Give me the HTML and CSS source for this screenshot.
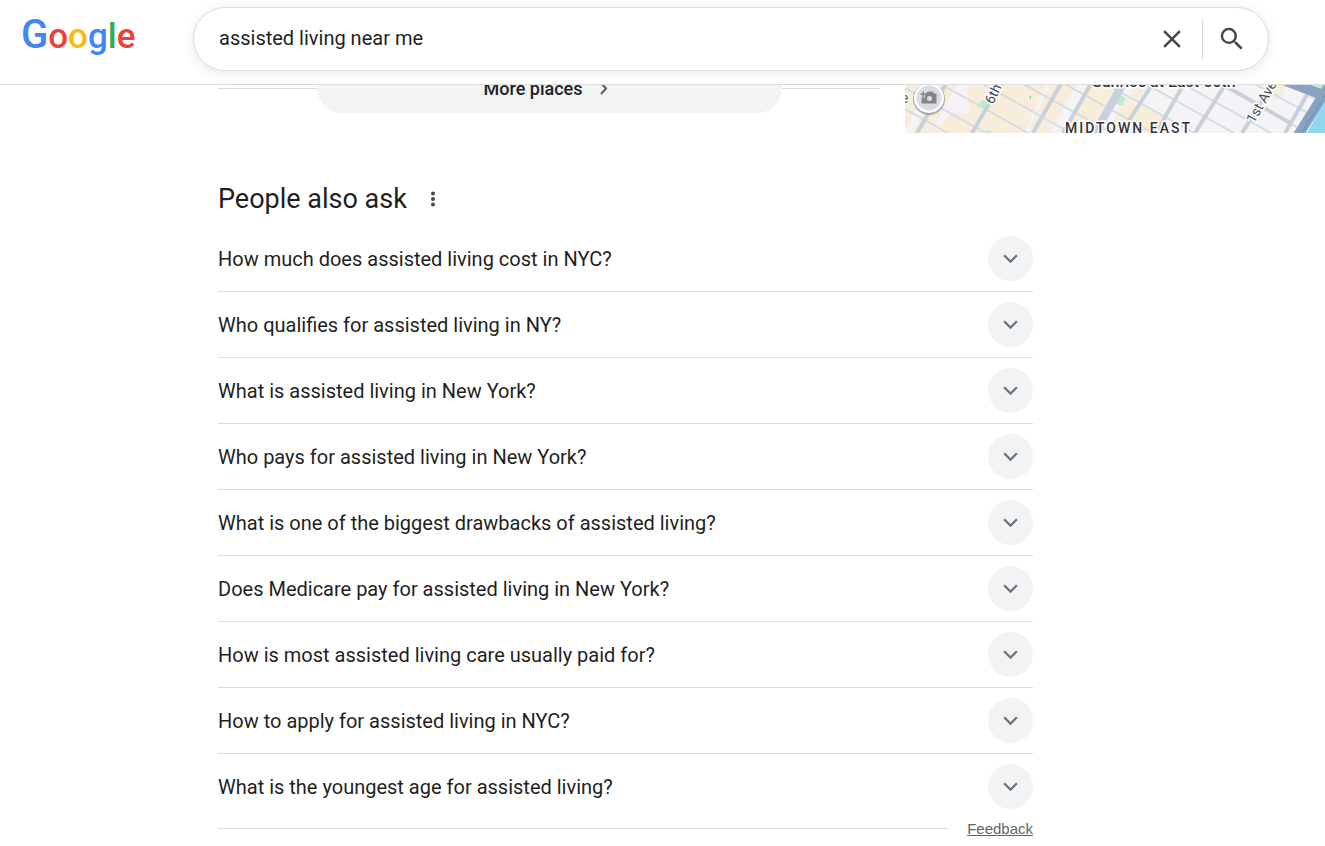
FILE: index.html
```html
<!DOCTYPE html>
<html lang="en">
<head>
<meta charset="utf-8">
<title>assisted living near me - Google Search</title>
<link rel="stylesheet" href="styles.css">
</head>
<body>
<header class="topbar">
  <a class="logo" href="#" aria-label="Google">
    <svg width="120" height="48" viewBox="0 0 120 48" aria-hidden="true">
      <text class="logo-text" x="-1" y="36"><tspan class="logo-cap" fill="#4285f4">G</tspan><tspan fill="#ea4335">o</tspan><tspan fill="#fbbc05">o</tspan><tspan fill="#4285f4">g</tspan><tspan fill="#34a853">l</tspan><tspan fill="#ea4335">e</tspan></text>
    </svg>
  </a>
  <form class="search" role="search">
    <input class="search-input" type="text" aria-label="Search" value="assisted living near me">
    <button class="icon-button" type="button" aria-label="Clear">
      <svg width="30" height="30" viewBox="0 0 24 24" fill="#474747"><path d="M19 6.41 17.59 5 12 10.59 6.41 5 5 6.41 10.59 12 5 17.59 6.41 19 12 13.41 17.59 19 19 17.59 13.41 12z"/></svg>
    </button>
    <span class="search-divider"></span>
    <button class="icon-button" type="button" aria-label="Search">
      <svg width="30" height="30" viewBox="0 0 24 24" fill="#474747"><path d="M15.5 14h-.79l-.28-.27A6.47 6.47 0 0 0 16 9.5 6.5 6.5 0 1 0 9.5 16c1.61 0 3.09-.59 4.23-1.57l.27.28v.79l5 4.99L20.49 19l-4.99-5zm-6 0C7.01 14 5 11.99 5 9.5S7.01 5 9.5 5 14 7.01 14 9.5 11.99 14 9.5 14z"/></svg>
    </button>
  </form>
</header>
<main class="results">
  <section class="places">
    <div class="more">
      <span class="rule"></span>
      <button class="more-button" type="button">More places
        <svg width="20" height="20" viewBox="0 0 20 20" fill="none" stroke="#5e6164" stroke-width="2"><path d="m7 5 5 5.500-5 5.500"/></svg>
      </button>
      <span class="rule"></span>
    </div>
    <svg class="map" viewBox="905 63 420 70" preserveAspectRatio="xMinYMin slice" role="img" aria-label="Map of Midtown East">
      <path fill="#f5f3f5" d="M905 63h420v70H905z"/>
      <g fill="#f7edda">
        <path d="M905 80h27l-27 50zM952 63h15l-17 35-20 35h-18zM966 78l38-15h52l-32 70h-94l22-20h18zM1060 63h28l-38 70h-22zM1088 85h30l-30 48h-24zM1126 98l42 20-8 15h-54zM1137 85h10l-10 17-9-4zM1265 85h20l-4 15-13-3-14 26-9-3z"/>
      </g>
      <g fill="#b9edcb"><path d="M983 100l5 3-5 6-7-3zM1119 94l7 4-4 8-7-3zM1300 85h25v8l-8-1zM987 130l5 2-2 2h-4z"/></g>
      <path fill="#8fd8ee" d="M1325 101v32h-18z"/>
      <path class="street" d="M905 88l81 45M905 109l43 24M930 78l98 55M965 74l106 59M1000 71l112 62M1036 68l117 65M1072 65l122 68M1108 63l126 70M1145 63l126 70M1182 63l122 68M1219 64l87 48M1256 66l60 33"/>
      <path class="avenue" d="M917 133l31-53M972 133l31-53M1033 133l30-53M1063 133l30-53M1128 122l27-42M1156 133l30-53M1195 133l33-53M1242 133l33-53M1285 133l23-40M1222 84l70 40"/>
      <path class="avenue avenue-wide" d="M1095 133l30-53"/>
      <g fill="none" stroke="#89a2c2" stroke-width="10"><path d="M1297 137l32-51M1286 81l34 13"/></g>
      <path stroke="#6f8cb1" fill="none" d="M1299 137l32-51"/>
      <path fill="#49c3df" d="M1029 97l2-1v3z"/>
      <g class="map-labels">
        <text x="901" y="103" font-size="14" fill="#5f6368">e</text>
        <text transform="translate(993 105) rotate(-64)" font-size="14">6th Ave</text>
        <text transform="translate(1254 124) rotate(-60)" font-size="14">1st Ave</text>
        <text class="map-strong" x="1092" y="87" font-size="16">Sunrise at East 56th</text>
        <text class="map-area" x="1065" y="133" font-size="14">MIDTOWN EAST</text>
      </g>
      <circle cx="929" cy="99" r="16" fill="#8b8b8b" opacity=".65"/>
      <circle cx="929" cy="98" r="15" fill="#fff"/>
      <circle cx="929" cy="98" r="12.500" fill="#dadce0"/>
      <path fill="#80868b" d="M926 93.500l1.500-2h5l1.500 2h2.500v10h-15v-6h3.500v-4zM922.500 91.500h1.500v2h2v1.500h-2v2h-1.500v-2h-2v-1.500h2z"/>
      <circle cx="929.500" cy="98.500" r="2.500" fill="#dadce0"/>
    </svg>
  </section>
  <section class="ask">
    <div class="ask-head">
      <h2 class="ask-title">People also ask</h2>
      <button class="icon-button" type="button" aria-label="About this result">
        <svg width="20" height="20" viewBox="0 0 20 20" fill="#474747"><circle cx="10" cy="4.500" r="2"/><circle cx="10" cy="10" r="2"/><circle cx="10" cy="15.500" r="2"/></svg>
      </button>
    </div>
    <button class="question" type="button">How much does assisted living cost in NYC?<span class="chevron"><svg viewBox="0 0 24 24"><path d="M7.400 8.600 12 13.200l4.600-4.600L18 10l-6 6-6-6z"/></svg></span></button>
    <button class="question" type="button">Who qualifies for assisted living in NY?<span class="chevron"><svg viewBox="0 0 24 24"><path d="M7.400 8.600 12 13.200l4.600-4.600L18 10l-6 6-6-6z"/></svg></span></button>
    <button class="question" type="button">What is assisted living in New York?<span class="chevron"><svg viewBox="0 0 24 24"><path d="M7.400 8.600 12 13.200l4.600-4.600L18 10l-6 6-6-6z"/></svg></span></button>
    <button class="question" type="button">Who pays for assisted living in New York?<span class="chevron"><svg viewBox="0 0 24 24"><path d="M7.400 8.600 12 13.200l4.600-4.600L18 10l-6 6-6-6z"/></svg></span></button>
    <button class="question" type="button">What is one of the biggest drawbacks of assisted living?<span class="chevron"><svg viewBox="0 0 24 24"><path d="M7.400 8.600 12 13.200l4.600-4.600L18 10l-6 6-6-6z"/></svg></span></button>
    <button class="question" type="button">Does Medicare pay for assisted living in New York?<span class="chevron"><svg viewBox="0 0 24 24"><path d="M7.400 8.600 12 13.200l4.600-4.600L18 10l-6 6-6-6z"/></svg></span></button>
    <button class="question" type="button">How is most assisted living care usually paid for?<span class="chevron"><svg viewBox="0 0 24 24"><path d="M7.400 8.600 12 13.200l4.600-4.600L18 10l-6 6-6-6z"/></svg></span></button>
    <button class="question" type="button">How to apply for assisted living in NYC?<span class="chevron"><svg viewBox="0 0 24 24"><path d="M7.400 8.600 12 13.200l4.600-4.600L18 10l-6 6-6-6z"/></svg></span></button>
    <button class="question question-last" type="button">What is the youngest age for assisted living?<span class="chevron"><svg viewBox="0 0 24 24"><path d="M7.400 8.600 12 13.200l4.600-4.600L18 10l-6 6-6-6z"/></svg></span></button>
    <div class="ask-foot">
      <span class="rule"></span>
      <a class="feedback" href="#">Feedback</a>
    </div>
  </section>
</main>
</body>
</html>
```

FILE: styles.css
```css
* { box-sizing: border-box; }
body {
  margin: 0;
  background: #fff;
  color: #1f1f1f;
  font-family: Roboto, "Liberation Sans", sans-serif;
}
button {
  border: 0;
  padding: 0;
  background: none;
  color: inherit;
  font-family: inherit;
}
svg { display: block; }
.topbar {
  position: sticky;
  top: 0;
  z-index: 2;
  display: flex;
  align-items: flex-start;
  height: 85px;
  padding: 7px 56px 0 22px;
  border-bottom: 1px solid #dadce0;
  background: #fff;
  overflow: hidden;
}
.logo { width: 171px; padding-top: 5px; }
.logo-text { font: 500 35px Roboto, sans-serif; }
.logo-cap { font-size: 40px; }
.search {
  flex: 1;
  display: flex;
  align-items: center;
  height: 64px;
  padding: 0 21px 0 25px;
  border: 1px solid #dadce0;
  border-radius: 32px;
  background: #fff;
  box-shadow: 0 2px 12px rgba(60, 64, 67, .12);
}
.search-input {
  flex: 1;
  min-width: 0;
  padding: 0 0 2px;
  border: 0;
  outline: 0;
  color: #1f1f1f;
  font: 20px Roboto, sans-serif;
}
.search-divider {
  width: 1px;
  height: 41px;
  margin: 0 14px 0 15px;
  background: #dadce0;
}
.results { margin-top: -22px; }
.places {
  display: flex;
  gap: 25px;
  padding-left: 218px;
}
.more {
  display: flex;
  align-items: center;
  width: 662px;
  height: 50px;
}
.rule {
  flex: 1;
  height: 1px;
  background: #dadce0;
}
.more-button {
  display: flex;
  align-items: center;
  justify-content: center;
  gap: 12px;
  width: 465px;
  height: 50px;
  border-radius: 25px;
  background: #f1f3f4;
  font-size: 18px;
  font-weight: 500;
}
.map {
  flex: 1;
  min-width: 0;
  height: 70px;
}
.street { fill: none; stroke: #d5dce4; stroke-width: 2; }
.avenue { fill: none; stroke: #c8d1da; stroke-width: 4; }
.avenue-wide { stroke-width: 8; }
.map-labels {
  fill: #3c4858;
  stroke: #fff;
  stroke-width: 3;
  paint-order: stroke;
  font-family: Roboto, sans-serif;
}
.map-strong, .map-area { fill: #333; font-weight: 500; }
.map-area { letter-spacing: 2px; }
.ask {
  width: 815px;
  margin-left: 218px;
  padding-top: 45px;
}
.ask-head {
  display: flex;
  align-items: center;
  gap: 16px;
  height: 48px;
  padding-bottom: 6px;
}
.ask-title {
  margin: 0;
  font-size: 27px;
  font-weight: 400;
  line-height: 36px;
}
.question {
  display: flex;
  align-items: center;
  justify-content: space-between;
  width: 100%;
  padding: 10px 0;
  border-bottom: 1px solid #dadce0;
  font-size: 20px;
  text-align: left;
}
.question-last { border-bottom: 0; }
.chevron {
  display: grid;
  place-items: center;
  width: 45px;
  height: 45px;
  border-radius: 50%;
  background: #f1f3f4;
}
.chevron svg { width: 29px; height: 29px; fill: #70757a; }
.ask-foot {
  display: flex;
  align-items: center;
  gap: 18px;
  height: 18px;
}
.feedback {
  color: #5f6368;
  font: 15px "Liberation Sans", sans-serif;
}
```
